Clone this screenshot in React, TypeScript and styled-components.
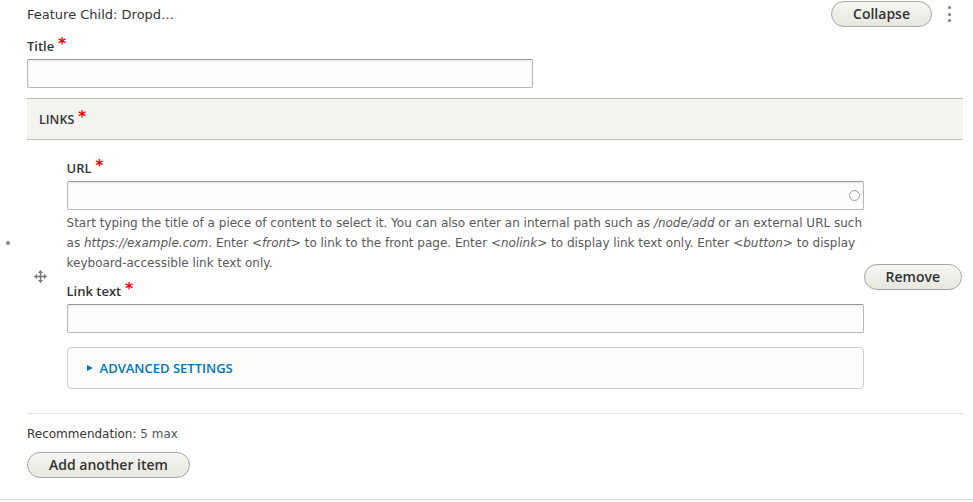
import React from 'react';
import styled, { createGlobalStyle } from 'styled-components';

const GlobalStyle = createGlobalStyle`
  html, body {
    margin: 0;
    padding: 0;
    background: #fff;
  }
  body {
    font-family: "DejaVu Sans", "Liberation Sans", sans-serif;
    font-size: 13px;
    color: #333;
  }
  * {
    box-sizing: border-box;
  }
`

const Page = styled.div`
  width: 973px;
  height: 502px;
  overflow: hidden;
`

const Body = styled.div`
  padding: 0 10px 0 27px;
`

const TopBar = styled.div`
  display: flex;
  align-items: center;
  justify-content: space-between;
  height: 28px;
`

const ItemTitle = styled.span`
  font-size: 13px;
  color: #333;
`

const TopActions = styled.div`
  display: flex;
  align-items: center;
  gap: 3px;
`

const Button = styled.button`
  height: 26px;
  padding: 0 21px;
  border: 1px solid #a6a6a6;
  border-radius: 20em;
  background: linear-gradient(to bottom, #f6f6f3, #e7e7df);
  font-family: "Open Sans", sans-serif;
  font-weight: 600;
  font-size: 14px;
  line-height: 24px;
  color: #333;
  cursor: pointer;
`

const Kebab = styled.button`
  width: 28px;
  height: 26px;
  padding: 0;
  border: none;
  background: none;
  display: flex;
  flex-direction: column;
  align-items: center;
  justify-content: center;
  gap: 3.5px;
  span {
    width: 3px;
    height: 3px;
    border-radius: 50%;
    background: #7a7a7a;
  }
`

type FieldProps = {
  $top?: number;
}

const Field = styled.div<FieldProps>`
  margin-top: ${({ $top }) => $top ?? 0}px;
`

const Label = styled.label`
  display: block;
  font-family: "Open Sans", sans-serif;
  font-weight: 600;
  font-size: 13px;
  line-height: 18px;
  height: 18px;
  margin-bottom: 4px;
  color: #333;
`

const Required = styled.span`
  color: #e00;
  font-family: "DejaVu Sans", sans-serif;
  font-weight: bold;
  font-size: 15px;
  line-height: 0;
  margin-left: 4px;
  position: relative;
  top: -2px;
`

type InputProps = {
  $width: number;
}

const InputWrap = styled.div<InputProps>`
  position: relative;
  width: ${({ $width }) => $width}px;
`

const TextInput = styled.input`
  display: block;
  width: 100%;
  height: 29px;
  border: 1px solid #b8b8b8;
  border-top-color: #999;
  border-radius: 2px;
  background: #fcfcfa;
  box-shadow: inset 0 1px 2px rgba(0, 0, 0, 0.08);
  outline: none;
`

const Throbber = styled.span`
  position: absolute;
  right: 4px;
  top: 9px;
  width: 11px;
  height: 11px;
  border: 1px solid #a0a0a0;
  border-radius: 50%;
`

const MultiTable = styled.div`
  margin-top: 10px;
`

const TableHead = styled.div`
  height: 42px;
  display: flex;
  align-items: center;
  padding-left: 12px;
  background: #f3f3f0;
  border-top: 1px solid #bfbfba;
  border-bottom: 1px solid #bfbfba;
  font-family: "Open Sans", sans-serif;
  font-weight: 600;
  font-size: 12.5px;
  color: #333;
  text-transform: uppercase;
`

const ItemRow = styled.div`
  position: relative;
  display: flex;
  border-bottom: 1px solid #e6e4df;
`

const ChangedDot = styled.span`
  position: absolute;
  left: -21px;
  top: 101px;
  width: 4px;
  height: 4px;
  border-radius: 50%;
  background: #8a8a8a;
`

const DragCell = styled.div`
  width: 40px;
  display: flex;
  align-items: center;
  padding-left: 7px;
`

const ContentCell = styled.div`
  width: 797px;
  padding: 19px 0 24px;
`

const OpsCell = styled.div`
  flex: 1;
  display: flex;
  align-items: center;
  justify-content: flex-end;
  padding-right: 1px;
`

const Description = styled.div`
  margin-top: 3px;
  font-size: 12px;
  line-height: 20px;
  color: #595959;
`

const Details = styled.div`
  margin-top: 14px;
  height: 42px;
  display: flex;
  align-items: center;
  gap: 7px;
  padding-left: 19px;
  border: 1px solid #ccc;
  border-radius: 4px;
  background: #fcfcfa;
  font-family: "Open Sans", sans-serif;
  font-weight: 600;
  font-size: 13px;
  color: #0074bd;
  text-transform: uppercase;
`

const Triangle = styled.span`
  width: 0;
  height: 0;
  border-left: 6px solid #0074bd;
  border-top: 3.5px solid transparent;
  border-bottom: 3.5px solid transparent;
`

const Recommendation = styled.div`
  margin-top: 10px;
  font-size: 12px;
  line-height: 20px;
  color: #555;
  b {
    color: #333;
    font-weight: normal;
  }
`

const AddRow = styled.div`
  margin-top: 8px;
`

const BottomRule = styled.div`
  margin-top: 21px;
  border-top: 1px solid #e0e0e0;
`

const DragHandle = () => (
  <svg width="13" height="13" viewBox="0 0 13 13" fill="#777">
    <rect x="5.75" y="2.5" width="1.5" height="8" />
    <rect x="2.5" y="5.75" width="8" height="1.5" />
    <path d="M6.5 0 L9 3 L4 3 Z M6.5 13 L9 10 L4 10 Z M0 6.5 L3 4 L3 9 Z M13 6.5 L10 4 L10 9 Z" />
  </svg>
)

const App = () => {
  return (
    <Page>
      <GlobalStyle />
      <Body>
        <TopBar>
          <ItemTitle>Feature Child: Dropd…</ItemTitle>
          <TopActions>
            <Button>Collapse</Button>
            <Kebab aria-label="More actions">
              <span />
              <span />
              <span />
            </Kebab>
          </TopActions>
        </TopBar>

        <Field $top={9}>
          <Label>Title<Required>*</Required></Label>
          <InputWrap $width={506}>
            <TextInput />
          </InputWrap>
        </Field>

        <MultiTable>
          <TableHead>Links<Required>*</Required></TableHead>
          <ItemRow>
            <ChangedDot />
            <DragCell>
              <DragHandle />
            </DragCell>
            <ContentCell>
              <Field>
                <Label>URL<Required>*</Required></Label>
                <InputWrap $width={797}>
                  <TextInput />
                  <Throbber />
                </InputWrap>
                <Description>
                  Start typing the title of a piece of content to select it. You can also enter an internal path such as <em>/node/add</em> or an external URL such as <em>https://example.com</em>. Enter <em>&lt;front&gt;</em> to link to the front page. Enter <em>&lt;nolink&gt;</em> to display link text only. Enter <em>&lt;button&gt;</em> to display keyboard-accessible link text only.
                </Description>
              </Field>
              <Field $top={9}>
                <Label>Link text<Required>*</Required></Label>
                <InputWrap $width={797}>
                  <TextInput />
                </InputWrap>
              </Field>
              <Details>
                <Triangle />
                Advanced settings
              </Details>
            </ContentCell>
            <OpsCell>
              <Button>Remove</Button>
            </OpsCell>
          </ItemRow>
        </MultiTable>

        <Recommendation><b>Recommendation:</b> 5 max</Recommendation>
        <AddRow>
          <Button>Add another item</Button>
        </AddRow>
      </Body>
      <BottomRule />
    </Page>
  );
}

export default App;
